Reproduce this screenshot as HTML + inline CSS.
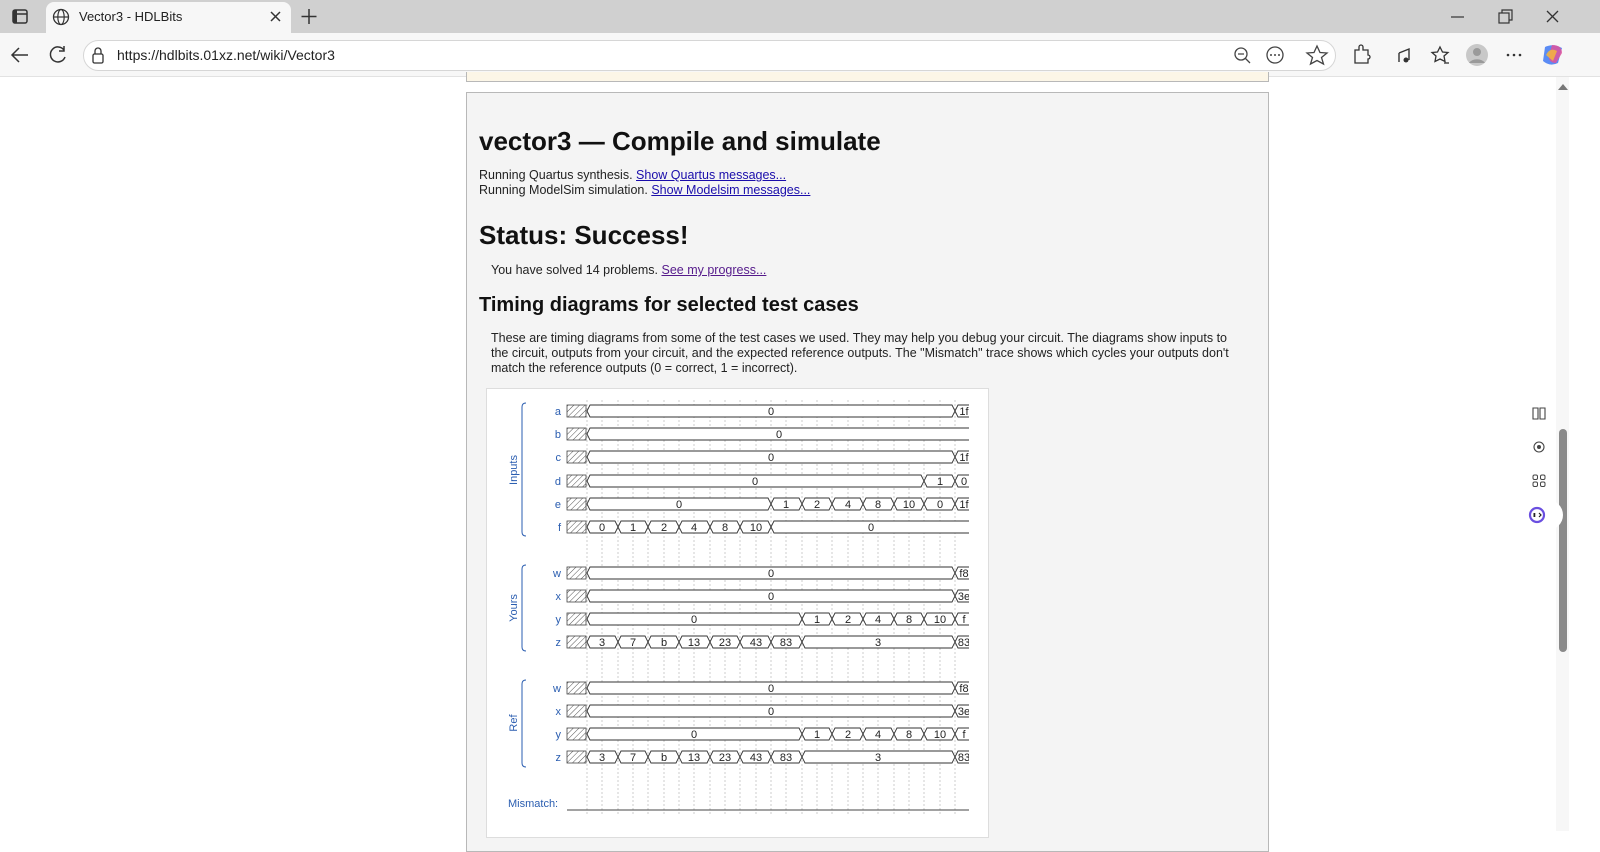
<!DOCTYPE html>
<html><head><meta charset="utf-8">
<style>
*{margin:0;padding:0;box-sizing:border-box}
body{width:1600px;height:831px;overflow:hidden;background:#fff;font-family:"Liberation Sans",sans-serif;position:relative}
.abs{position:absolute}
#tabbar{left:0;top:0;width:1600px;height:33px;background:#d0d0d0}
#tab{left:46px;top:2px;width:245px;height:31px;background:#f7f7f7;border-radius:8px 8px 0 0}
#nav{left:0;top:33px;width:1600px;height:44px;background:#f7f7f7;border-bottom:1px solid #e2e2e2}
#url{left:83px;top:40px;width:1253px;height:31px;background:#fff;border:1px solid #d6d6d6;border-radius:16px}
.t{font-size:13px;color:#222}
#frame{left:466px;top:92px;width:803px;height:760px;background:#f4f4f4;border:1px solid #b8b8b8}
#yel{left:466px;top:72px;width:803px;height:10px;background:#fcf6e7;border:1px solid #b8b8b8;border-top:none}
h1{position:absolute;left:479px;top:126px;font-size:26px;font-weight:bold;color:#111;white-space:nowrap}
h2{position:absolute;font-weight:bold;color:#111;white-space:nowrap}
.p{position:absolute;font-size:12.5px;color:#222;line-height:15px;white-space:nowrap}
a{color:#1a0dab;text-decoration:underline}
#diag{left:486px;top:388px;width:503px;height:450px;background:#fff;border:1px solid #ddd}
#sb{left:1556px;top:77px;width:13px;height:754px;background:#f7f7f7}
</style></head><body>
<div class="abs" id="tabbar"></div>
<div class="abs" id="tab"></div>
<svg class="abs" style="left:0;top:0" width="1600" height="80">
<rect x="13" y="10" width="14" height="13" rx="2" fill="none" stroke="#333" stroke-width="1.5"/><line x1="13" y1="14" x2="27" y2="14" stroke="#333" stroke-width="1.5"/><rect x="13" y="10" width="4" height="13" fill="#333"/>
<circle cx="61" cy="17" r="7.5" fill="none" stroke="#333" stroke-width="1.3"/><ellipse cx="61" cy="17" rx="3.2" ry="7.5" fill="none" stroke="#333" stroke-width="1.2"/><line x1="53.5" y1="17" x2="68.5" y2="17" stroke="#333" stroke-width="1.2"/>
<path d="M271 12 L280 21 M280 12 L271 21" stroke="#333" stroke-width="1.5"/>
<path d="M309 9 V24 M301.5 16.5 H316.5" stroke="#333" stroke-width="1.5"/>
<path d="M1451 17 H1464" stroke="#333" stroke-width="1.2"/>
<rect x="1499" y="13" width="10" height="10" fill="none" stroke="#333" stroke-width="1.2"/><path d="M1502 13 V10 H1512 V20 H1509" fill="none" stroke="#333" stroke-width="1.2"/>
<path d="M1547 11 L1558 22 M1558 11 L1547 22" stroke="#333" stroke-width="1.3"/>
</svg>
<div class="abs t" style="left:79px;top:9px;font-size:13px">Vector3 - HDLBits</div>
<div class="abs" id="nav"></div>
<div class="abs" id="url"></div>
<svg class="abs" style="left:0;top:33px" width="1600" height="44">
<path d="M28 22 H12 M19 15 L12 22 L19 29" fill="none" stroke="#333" stroke-width="1.5"/>
<path d="M64 17 A7.5 7.5 0 1 0 65 24 M64 13 V18 H59" fill="none" stroke="#333" stroke-width="1.5"/>
<rect x="93" y="21" width="10" height="9" rx="1.5" fill="none" stroke="#333" stroke-width="1.3"/><path d="M95 21 V18 A3 3 0 0 1 101 18 V21" fill="none" stroke="#333" stroke-width="1.3"/>
<circle cx="1241" cy="21" r="6" fill="none" stroke="#444" stroke-width="1.3"/><path d="M1245 25 L1250 30 M1238 21 H1244" stroke="#444" stroke-width="1.3"/>
<circle cx="1275" cy="22" r="8" fill="none" stroke="#444" stroke-width="1.3"/><circle cx="1271" cy="22" r="1" fill="#444"/><circle cx="1275" cy="22" r="1" fill="#444"/><circle cx="1279" cy="22" r="1" fill="#444"/>
<path d="M1317 13 L1320 19.5 L1327 20 L1321.5 24.5 L1323.5 31 L1317 27.5 L1310.5 31 L1312.5 24.5 L1307 20 L1314 19.5 Z" fill="none" stroke="#444" stroke-width="1.3"/>
<path d="M1355 17 H1359 V14 A2 2 0 0 1 1363 14 V17 H1368 V22 A2 2 0 0 1 1368 26 V30 H1355 Z" fill="none" stroke="#333" stroke-width="1.3"/>
<path d="M1399 20 L1409 16 V27 M1399 20 V29" fill="none" stroke="#333" stroke-width="1.4"/><circle cx="1406" cy="27" r="2.5" fill="#333"/>
<path d="M1440 14 L1442.5 19 L1448 19.5 L1444 23 L1445 28.5 L1440 26 L1435 28.5 L1436 23 L1432 19.5 L1437.5 19 Z" fill="none" stroke="#333" stroke-width="1.3"/><path d="M1444 30 H1449" stroke="#333" stroke-width="1.3"/>
<circle cx="1477" cy="22" r="11" fill="#c8c8c8"/><circle cx="1477" cy="19" r="4" fill="#9a9a9a"/><path d="M1469 30 A9 7 0 0 1 1485 30" fill="#9a9a9a"/>
<circle cx="1508" cy="22" r="1.3" fill="#333"/><circle cx="1514" cy="22" r="1.3" fill="#333"/><circle cx="1520" cy="22" r="1.3" fill="#333"/>
<path d="M1545 14 Q1553 10 1562 15 L1558 30 Q1550 34 1543 28 Z" fill="#5b8cf5"/><path d="M1552 12 Q1562 12 1562 20 L1556 30 Q1548 30 1549 22 Z" fill="#e0529c" opacity=".85"/><path d="M1546 22 Q1550 14 1557 18 L1553 28 Z" fill="#f4b63c" opacity=".85"/>
</svg>
<div class="abs t" style="left:117px;top:47px;font-size:14px;color:#222">https://hdlbits.01xz.net/wiki/Vector3</div>

<div class="abs" id="yel"></div>
<div class="abs" id="frame"></div>
<h1>vector3 — Compile and simulate</h1>
<div class="p" style="left:479px;top:168px">Running Quartus synthesis. <a>Show Quartus messages...</a></div>
<div class="p" style="left:479px;top:183px">Running ModelSim simulation. <a>Show Modelsim messages...</a></div>
<h2 style="left:479px;top:220px;font-size:26px">Status: Success!</h2>
<div class="p" style="left:491px;top:263px">You have solved 14 problems. <a style="color:#551a8b">See my progress...</a></div>
<h2 style="left:479px;top:294px;font-size:20px">Timing diagrams for selected test cases</h2>
<div class="p" style="left:491px;top:331px;white-space:normal;width:750px">These are timing diagrams from some of the test cases we used. They may help you debug your circuit. The diagrams show inputs to the circuit, outputs from your circuit, and the expected reference outputs. The "Mismatch" trace shows which cycles your outputs don't match the reference outputs (0 = correct, 1 = incorrect).</div>
<div class="abs" id="diag"></div>

<svg class="abs" style="left:0;top:0" width="1600" height="831" font-family="Liberation Sans, sans-serif" font-size="11">
<defs>
<pattern id="h" width="4" height="4" patternUnits="userSpaceOnUse" patternTransform="rotate(45)"><line x1="0" y1="0" x2="0" y2="4" stroke="#555" stroke-width="1"/></pattern>
<clipPath id="c"><rect x="560" y="390" width="409" height="440"/></clipPath>
</defs>
<g stroke="#ccc" stroke-dasharray="2,2" stroke-width="1">
<line x1="587" y1="400" x2="587" y2="815"/><line x1="602" y1="400" x2="602" y2="815"/><line x1="618" y1="400" x2="618" y2="815"/><line x1="633" y1="400" x2="633" y2="815"/><line x1="648" y1="400" x2="648" y2="815"/><line x1="664" y1="400" x2="664" y2="815"/><line x1="679" y1="400" x2="679" y2="815"/><line x1="694" y1="400" x2="694" y2="815"/><line x1="710" y1="400" x2="710" y2="815"/><line x1="725" y1="400" x2="725" y2="815"/><line x1="740" y1="400" x2="740" y2="815"/><line x1="756" y1="400" x2="756" y2="815"/><line x1="771" y1="400" x2="771" y2="815"/><line x1="786" y1="400" x2="786" y2="815"/><line x1="802" y1="400" x2="802" y2="815"/><line x1="817" y1="400" x2="817" y2="815"/><line x1="832" y1="400" x2="832" y2="815"/><line x1="848" y1="400" x2="848" y2="815"/><line x1="863" y1="400" x2="863" y2="815"/><line x1="878" y1="400" x2="878" y2="815"/><line x1="894" y1="400" x2="894" y2="815"/><line x1="909" y1="400" x2="909" y2="815"/><line x1="924" y1="400" x2="924" y2="815"/><line x1="940" y1="400" x2="940" y2="815"/><line x1="955" y1="400" x2="955" y2="815"/>
</g>
<g fill="#2a5db0" font-size="11">
<text x="561" y="415" text-anchor="end">a</text><text x="561" y="438" text-anchor="end">b</text><text x="561" y="461" text-anchor="end">c</text><text x="561" y="485" text-anchor="end">d</text><text x="561" y="508" text-anchor="end">e</text><text x="561" y="531" text-anchor="end">f</text>
<text x="561" y="577" text-anchor="end">w</text><text x="561" y="600" text-anchor="end">x</text><text x="561" y="623" text-anchor="end">y</text><text x="561" y="646" text-anchor="end">z</text>
<text x="561" y="692" text-anchor="end">w</text><text x="561" y="715" text-anchor="end">x</text><text x="561" y="738" text-anchor="end">y</text><text x="561" y="761" text-anchor="end">z</text>
<text x="508" y="807">Mismatch:</text>
<text transform="translate(517,470) rotate(-90)" text-anchor="middle">Inputs</text>
<text transform="translate(517,608) rotate(-90)" text-anchor="middle">Yours</text>
<text transform="translate(517,723) rotate(-90)" text-anchor="middle">Ref</text>
</g>
<g fill="none" stroke="#2a5db0" stroke-width="1">
<path d="M526 403 Q522 403 522 407 V532 Q522 536 526 536"/>
<path d="M526 565 Q522 565 522 569 V647 Q522 651 526 651"/>
<path d="M526 680 Q522 680 522 684 V763 Q522 767 526 767"/>
</g>
<g fill="url(#h)" stroke="#444" stroke-width="0.8">
<rect x="567" y="405" width="19" height="12"/><rect x="567" y="428" width="19" height="12"/><rect x="567" y="451" width="19" height="12"/><rect x="567" y="475" width="19" height="12"/><rect x="567" y="498" width="19" height="12"/><rect x="567" y="521" width="19" height="12"/>
<rect x="567" y="567" width="19" height="12"/><rect x="567" y="590" width="19" height="12"/><rect x="567" y="613" width="19" height="12"/><rect x="567" y="636" width="19" height="12"/>
<rect x="567" y="682" width="19" height="12"/><rect x="567" y="705" width="19" height="12"/><rect x="567" y="728" width="19" height="12"/><rect x="567" y="751" width="19" height="12"/>
</g>
<path d="M567 810 H969" stroke="#444" stroke-width="1"/>
<g clip-path="url(#c)" fill="#fff" stroke="#333" stroke-width="0.9">
<path d="M587 411 L590 405 H952 L955 411 L952 417 H590 Z"/><path d="M955 411 L958 405 H990 V417 H958 Z"/>
<path d="M587 434 L590 428 H990 V440 H590 Z"/>
<path d="M587 457 L590 451 H952 L955 457 L952 463 H590 Z"/><path d="M955 457 L958 451 H990 V463 H958 Z"/>
<path d="M587 481 L590 475 H921 L924 481 L921 487 H590 Z"/><path d="M924 481 L927 475 H952 L955 481 L952 487 H927 Z"/><path d="M955 481 L958 475 H990 V487 H958 Z"/>
<path d="M587 504 L590 498 H768 L771 504 L768 510 H590 Z"/>
<path d="M771 504 L774 498 H799 L802 504 L799 510 H774 Z"/><path d="M802 504 L805 498 H829 L832 504 L829 510 H805 Z"/><path d="M832 504 L835 498 H860 L863 504 L860 510 H835 Z"/><path d="M863 504 L866 498 H891 L894 504 L891 510 H866 Z"/><path d="M894 504 L897 498 H921 L924 504 L921 510 H897 Z"/><path d="M924 504 L927 498 H952 L955 504 L952 510 H927 Z"/><path d="M955 504 L958 498 H990 V510 H958 Z"/>
<path d="M587 527 L590 521 H615 L618 527 L615 533 H590 Z"/><path d="M618 527 L621 521 H645 L648 527 L645 533 H621 Z"/><path d="M648 527 L651 521 H676 L679 527 L676 533 H651 Z"/><path d="M679 527 L682 521 H707 L710 527 L707 533 H682 Z"/><path d="M710 527 L713 521 H737 L740 527 L737 533 H713 Z"/><path d="M740 527 L743 521 H768 L771 527 L768 533 H743 Z"/><path d="M771 527 L774 521 H990 V533 H774 Z"/>
<path d="M587 573 L590 567 H952 L955 573 L952 579 H590 Z"/><path d="M955 573 L958 567 H990 V579 H958 Z"/>
<path d="M587 596 L590 590 H952 L955 596 L952 602 H590 Z"/><path d="M955 596 L958 590 H990 V602 H958 Z"/>
<path d="M587 619 L590 613 H799 L802 619 L799 625 H590 Z"/><path d="M802 619 L805 613 H829 L832 619 L829 625 H805 Z"/><path d="M832 619 L835 613 H860 L863 619 L860 625 H835 Z"/><path d="M863 619 L866 613 H891 L894 619 L891 625 H866 Z"/><path d="M894 619 L897 613 H921 L924 619 L921 625 H897 Z"/><path d="M924 619 L927 613 H952 L955 619 L952 625 H927 Z"/><path d="M955 619 L958 613 H990 V625 H958 Z"/>
<path d="M587 642 L590 636 H615 L618 642 L615 648 H590 Z"/><path d="M618 642 L621 636 H645 L648 642 L645 648 H621 Z"/><path d="M648 642 L651 636 H676 L679 642 L676 648 H651 Z"/><path d="M679 642 L682 636 H707 L710 642 L707 648 H682 Z"/><path d="M710 642 L713 636 H737 L740 642 L737 648 H713 Z"/><path d="M740 642 L743 636 H768 L771 642 L768 648 H743 Z"/><path d="M771 642 L774 636 H799 L802 642 L799 648 H774 Z"/><path d="M802 642 L805 636 H952 L955 642 L952 648 H805 Z"/><path d="M955 642 L958 636 H990 V648 H958 Z"/>
<path d="M587 688 L590 682 H952 L955 688 L952 694 H590 Z"/><path d="M955 688 L958 682 H990 V694 H958 Z"/>
<path d="M587 711 L590 705 H952 L955 711 L952 717 H590 Z"/><path d="M955 711 L958 705 H990 V717 H958 Z"/>
<path d="M587 734 L590 728 H799 L802 734 L799 740 H590 Z"/><path d="M802 734 L805 728 H829 L832 734 L829 740 H805 Z"/><path d="M832 734 L835 728 H860 L863 734 L860 740 H835 Z"/><path d="M863 734 L866 728 H891 L894 734 L891 740 H866 Z"/><path d="M894 734 L897 728 H921 L924 734 L921 740 H897 Z"/><path d="M924 734 L927 728 H952 L955 734 L952 740 H927 Z"/><path d="M955 734 L958 728 H990 V740 H958 Z"/>
<path d="M587 757 L590 751 H615 L618 757 L615 763 H590 Z"/><path d="M618 757 L621 751 H645 L648 757 L645 763 H621 Z"/><path d="M648 757 L651 751 H676 L679 757 L676 763 H651 Z"/><path d="M679 757 L682 751 H707 L710 757 L707 763 H682 Z"/><path d="M710 757 L713 751 H737 L740 757 L737 763 H713 Z"/><path d="M740 757 L743 751 H768 L771 757 L768 763 H743 Z"/><path d="M771 757 L774 751 H799 L802 757 L799 763 H774 Z"/><path d="M802 757 L805 751 H952 L955 757 L952 763 H805 Z"/><path d="M955 757 L958 751 H990 V763 H958 Z"/>
</g>
<g clip-path="url(#c)" fill="#222" font-size="11" text-anchor="middle">
<text x="771" y="415">0</text><text x="964" y="415">1f</text>
<text x="779" y="438">0</text>
<text x="771" y="461">0</text><text x="964" y="461">1f</text>
<text x="755" y="485">0</text><text x="940" y="485">1</text><text x="964" y="485">0</text>
<text x="679" y="508">0</text><text x="786" y="508">1</text><text x="817" y="508">2</text><text x="848" y="508">4</text><text x="878" y="508">8</text><text x="909" y="508">10</text><text x="940" y="508">0</text><text x="964" y="508">1f</text>
<text x="602" y="531">0</text><text x="633" y="531">1</text><text x="664" y="531">2</text><text x="694" y="531">4</text><text x="725" y="531">8</text><text x="756" y="531">10</text><text x="871" y="531">0</text>
<text x="771" y="577">0</text><text x="964" y="577">f8</text>
<text x="771" y="600">0</text><text x="964" y="600">3e</text>
<text x="694" y="623">0</text><text x="817" y="623">1</text><text x="848" y="623">2</text><text x="878" y="623">4</text><text x="909" y="623">8</text><text x="940" y="623">10</text><text x="964" y="623">f</text>
<text x="602" y="646">3</text><text x="633" y="646">7</text><text x="664" y="646">b</text><text x="694" y="646">13</text><text x="725" y="646">23</text><text x="756" y="646">43</text><text x="786" y="646">83</text><text x="878" y="646">3</text><text x="964" y="646">83</text>
<text x="771" y="692">0</text><text x="964" y="692">f8</text>
<text x="771" y="715">0</text><text x="964" y="715">3e</text>
<text x="694" y="738">0</text><text x="817" y="738">1</text><text x="848" y="738">2</text><text x="878" y="738">4</text><text x="909" y="738">8</text><text x="940" y="738">10</text><text x="964" y="738">f</text>
<text x="602" y="761">3</text><text x="633" y="761">7</text><text x="664" y="761">b</text><text x="694" y="761">13</text><text x="725" y="761">23</text><text x="756" y="761">43</text><text x="786" y="761">83</text><text x="878" y="761">3</text><text x="964" y="761">83</text>
</g>
</svg>

<div class="abs" id="sb"></div>
<svg class="abs" style="left:1500px;top:77px" width="100" height="754">
<path d="M1558 13 L1563 7 L1568 13 Z" transform="translate(-1500,0)" fill="#777"/>
<rect x="59" y="352" width="8" height="223" rx="4" fill="#8a8a8a"/>
<circle cx="39" cy="336" r="14" fill="#fff"/><circle cx="39" cy="370" r="14" fill="#fff"/><circle cx="39" cy="404" r="14" fill="#fff"/>
<rect x="23" y="423" width="40" height="30" rx="15" fill="#fff"/>
<path d="M33 331 H38 V342 H33 Z M40 331 H45 V342 H40 Z" fill="none" stroke="#444" stroke-width="1.1"/>
<circle cx="39" cy="370" r="5" fill="none" stroke="#444" stroke-width="1.1"/><circle cx="39" cy="370" r="2" fill="#444"/>
<rect x="33" y="398" width="4.5" height="4.5" rx="1.5" fill="none" stroke="#444"/><rect x="40.5" y="398" width="4.5" height="4.5" rx="1.5" fill="none" stroke="#444"/><rect x="33" y="405" width="4.5" height="4.5" rx="1.5" fill="none" stroke="#444"/><rect x="40.5" y="405" width="4.5" height="4.5" rx="1.5" fill="none" stroke="#444"/>
<circle cx="37" cy="438" r="7" fill="none" stroke="#6a4fe0" stroke-width="2.2"/><rect x="33.5" y="436" width="1.8" height="4" fill="#222"/><path d="M39 436 L41 438 L39 440" stroke="#222" fill="none" stroke-width="1.2"/>
</svg>
</body></html>
